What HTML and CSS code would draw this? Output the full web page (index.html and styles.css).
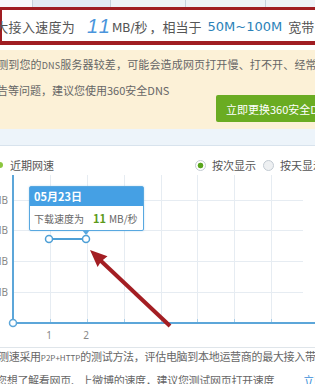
FILE: index.html
```html
<!DOCTYPE html>
<html lang="zh-CN">
<head>
  <meta charset="UTF-8" />
  <meta name="viewport" content="width=device-width, initial-scale=1.0"/>
  <title>宽带测速</title>
  <link rel="stylesheet" href="styles.css">
</head>
<body>

<div class="page">
  <div class="tabs">
    <span class="tab t1"></span>
    <span class="tab t2"></span>
    <span class="tab t3"></span>
    <span class="tab t4"></span>
    <span class="tab t5"></span>
  </div>

  <div class="result">
    <span class="lead">最大接入速度为</span>
    <span class="speed">11</span><span class="unit"><i>MB/</i>秒</span>
    <span class="equal">，相当于</span>
    <span class="bw">50M~100M</span>
    <span class="bw-label">宽带</span>
  </div>

  <div class="notice">
    <div class="notice-line first">检测到您的<small>DNS</small>服务器较差，可能会造成网页打开慢、打不开、经常弹</div>
    <div class="notice-row">
      <div class="notice-line">广告等问题，建议您使用360安全DNS</div>
      <button class="btn-dns">立即更换360安全DNS</button>
    </div>
  </div>

  <div class="band"></div>

  <div class="panel">
    <div class="panel-head">
      <span class="dot"></span>
      <span class="title">近期网速</span>
      <div class="opts">
        <span class="radio on"></span><span class="opt">按次显示</span>
        <span class="radio"></span><span class="opt">按天显示</span>
      </div>
    </div>

    <div class="chart">
      <svg width="315" height="175" viewBox="0 0 315 175">
        <g stroke="#e6ecf2" stroke-width="1">
          <line x1="50.5" y1="3" x2="50.5" y2="151"/>
          <line x1="87.5" y1="3" x2="87.5" y2="151"/>
          <line x1="124.5" y1="3" x2="124.5" y2="151"/>
          <line x1="161.5" y1="3" x2="161.5" y2="151"/>
          <line x1="197.5" y1="3" x2="197.5" y2="151"/>
          <line x1="234.5" y1="3" x2="234.5" y2="151"/>
          <line x1="271.5" y1="3" x2="271.5" y2="151"/>
          <line x1="13" y1="28.5" x2="303" y2="28.5"/>
          <line x1="13" y1="58.5" x2="303" y2="58.5"/>
          <line x1="13" y1="89.5" x2="303" y2="89.5"/>
          <line x1="13" y1="120.5" x2="303" y2="120.5"/>
        </g>
        <g stroke="#a9cfe9" stroke-width="1">
          <line x1="50.5" y1="147" x2="50.5" y2="151"/>
          <line x1="87.5" y1="147" x2="87.5" y2="151"/>
          <line x1="124.5" y1="147" x2="124.5" y2="151"/>
          <line x1="161.5" y1="147" x2="161.5" y2="151"/>
          <line x1="197.5" y1="147" x2="197.5" y2="151"/>
          <line x1="234.5" y1="147" x2="234.5" y2="151"/>
          <line x1="271.5" y1="147" x2="271.5" y2="151"/>
        </g>
        <g class="axis-label" text-anchor="end">
          <text x="8" y="32">16MB</text>
          <text x="8" y="62">12MB</text>
          <text x="8" y="93">8MB</text>
          <text x="8" y="124">4MB</text>
        </g>
        <line x1="13" y1="3" x2="13" y2="151" stroke="#5ca6d9" stroke-width="2"/>
        <line x1="13" y1="151" x2="315" y2="151" stroke="#5ca6d9" stroke-width="2"/>
        <circle cx="13" cy="151" r="3.5" fill="#fff" stroke="#5ca6d9" stroke-width="1.5"/>
        <g class="axis-label" text-anchor="middle">
          <text x="49" y="167">1</text>
          <text x="86" y="167">2</text>
        </g>
        <line x1="49" y1="67" x2="86" y2="67" stroke="#4d9fd6" stroke-width="2"/>
        <circle cx="49" cy="67" r="3.5" fill="#fff" stroke="#4d9fd6" stroke-width="1.5"/>
        <circle cx="86" cy="67" r="3.5" fill="#fff" stroke="#4d9fd6" stroke-width="1.5"/>
        <!-- annotation arrow -->
        <line x1="170" y1="154" x2="100" y2="88" stroke="#a31e23" stroke-width="4"/>
        <polygon points="90,78 107.5,84.3 101,89.5 97.6,95" fill="#a31e23"/>
      </svg>

      <div class="tip">
        <div class="tip-head">05月23日</div>
        <div class="tip-body">下载速度为<b>11</b>MB/秒</div>
      </div>
    </div>
  </div>

  <div class="foot">
    <div class="foot-line l1">测速采用<small>P2P+HTTP</small>的测试方法，评估电脑到本地运营商的最大接入带宽</div>
    <div class="foot-line l2">您想了解看网页、上微博的速度，建议您测试网页打开速度<a href="#">立即测试</a></div>
  </div>
</div>

</body>
</html>
```

FILE: styles.css
```css
* {
  box-sizing: border-box;
}

body {
  margin: 0;
  overflow: hidden;
  background: #fff;
  font-family: "Noto Sans CJK SC", "Noto Sans", sans-serif;
  color: #666;
}

.page {
  width: 315px;
  height: 384px;
  overflow: hidden;
}

/* top tab strip, mostly cut off */
.tabs {
  display: flex;
  height: 7px;
}

.tab {
  border-left: 1px solid #c6d1dc;
  background: #eef2f7;
}

.t1 { width: 32px; border-left: none; background: #f8f9fb; }
.t2 { width: 78px; background: #e3eaf2; }
.t3 { width: 75px; }
.t4 { width: 80px; }
.t5 { flex: 1; }

/* result row with red annotation box */
.result {
  display: flex;
  align-items: center;
  height: 38px;
  padding-top: 2px;
  border: solid #a01d22;
  border-width: 3px 0 4px 2px;
  font-size: 13px;
  color: #555;
  white-space: nowrap;
}

.lead {
  margin-left: -20px;
  letter-spacing: 0.3px;
}

.speed {
  margin-left: 12px;
  font-family: "Liberation Sans", sans-serif;
  font-style: italic;
  font-size: 20px;
  letter-spacing: 2px;
  color: #4a95dc;
}

.unit i {
  font-style: normal;
  font-family: "DejaVu Sans", sans-serif;
  font-size: 12px;
}

.equal {
  margin-left: 2px;
}

.bw {
  margin-left: 6px;
  font-family: "DejaVu Sans", sans-serif;
  color: #2b82b8;
}

.bw-label {
  margin-left: 6px;
}

/* yellow notice */
.notice {
  margin-top: 5px;
  padding: 2px 0 7px;
  background: #fcf1d7;
  font-size: 11px;
  line-height: 24px;
  color: #666;
}

.notice-line {
  margin-left: -14px;
  white-space: nowrap;
}

.notice-line.first {
  letter-spacing: 0.15px;
}

.notice-line small {
  font-size: 9px;
}

.notice-row {
  display: flex;
  align-items: flex-start;
}

.btn-dns {
  flex-shrink: 0;
  margin-left: auto;
  margin-right: -35px;
  margin-top: 17px;
  width: 134px;
  height: 27px;
  padding: 0 0 0 10px;
  border: none;
  border-radius: 2px;
  background: #6aac22;
  color: #fff;
  font-family: inherit;
  font-size: 11px;
  text-align: left;
  white-space: nowrap;
}

.band {
  height: 17px;
  background: #edf4fa;
  border-bottom: 1px solid #d8e3ed;
}

/* chart panel */
.panel {
  border-bottom: 1px solid #dfe5ea;
}

.panel-head {
  display: flex;
  align-items: center;
  height: 26px;
  padding-top: 12px;
  font-size: 11px;
  color: #555;
}

.dot {
  width: 6px;
  height: 6px;
  margin-left: -3px;
  margin-right: 7px;
  border-radius: 50%;
  background: #8cc63f;
}

.opts {
  display: flex;
  flex-shrink: 0;
  align-items: center;
  margin-left: auto;
  margin-right: -9px;
  white-space: nowrap;
}

.radio {
  width: 11px;
  height: 11px;
  margin-right: 6px;
  border: 1px solid #c3cbd3;
  border-radius: 50%;
  background: #eef0f2;
}

.radio.on {
  background: radial-gradient(circle, #59a51e 0 2.5px, #fff 3.2px);
}

.opt {
  margin-right: 7px;
}

.opt:last-child {
  margin-right: 0;
}

.chart {
  position: relative;
  height: 175px;
}

.chart svg {
  display: block;
}

.axis-label {
  font-family: "Noto Sans", sans-serif;
  font-size: 10px;
  fill: #888;
}

.tip {
  position: absolute;
  left: 29px;
  top: 14px;
  width: 115px;
  border: 1px solid #58a8e0;
  border-radius: 2px;
  background: #fff;
  box-shadow: 0 0 2px rgba(88, 168, 224, 0.4);
}

.tip::after {
  content: '';
  position: absolute;
  left: 52px;
  bottom: -5px;
  border-left: 4px solid transparent;
  border-right: 4px solid transparent;
  border-top: 5px solid #58a8e0;
}

.tip-head {
  height: 19px;
  padding-left: 4px;
  background: #45a0e4;
  color: #fff;
  font-size: 11px;
  font-weight: bold;
  line-height: 19px;
}

.tip-body {
  height: 24px;
  padding-left: 4px;
  font-size: 10px;
  line-height: 24px;
  color: #666;
  white-space: nowrap;
}

.tip-body b {
  margin: 0 3px 0 9px;
  font-size: 11px;
  color: #5b9a1a;
}

/* footer note */
.foot {
  margin-top: -3px;
  font-size: 11px;
  line-height: 22px;
  color: #666;
  white-space: nowrap;
  letter-spacing: -0.3px;
}

.foot-line.l1 {
  margin-left: -2px;
}

.foot-line.l2 {
  margin-left: -4px;
}

.foot small {
  font-size: 8px;
  letter-spacing: 0;
}

.foot a {
  margin-left: 29px;
  color: #3a8ed8;
  text-decoration: none;
}
```
